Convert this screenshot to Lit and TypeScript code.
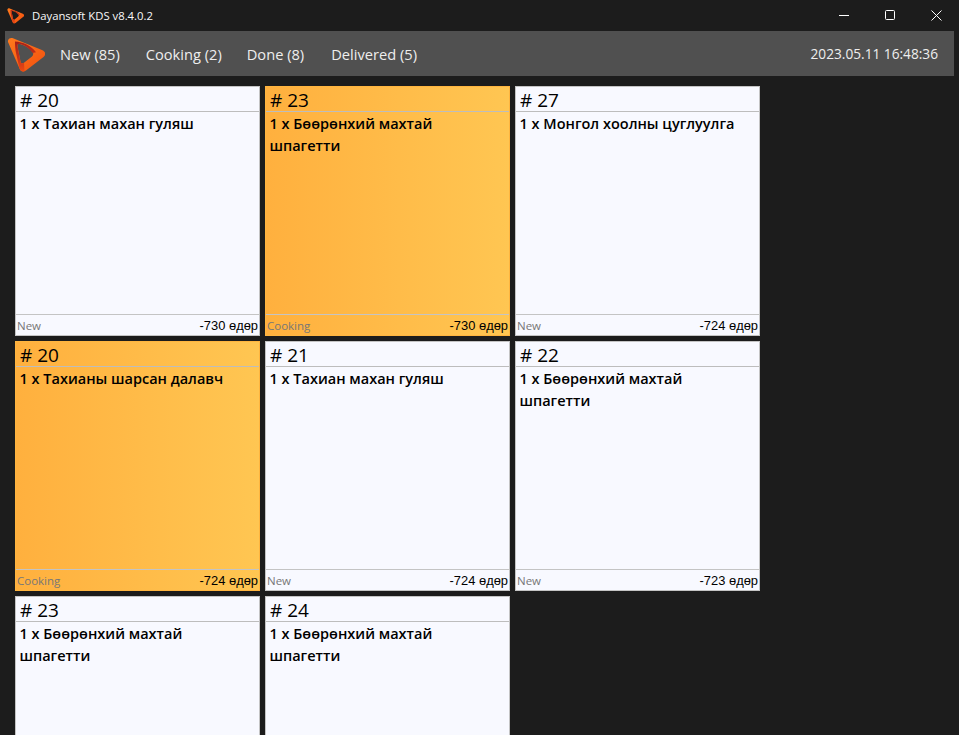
import { LitElement, html, css, svg } from "lit";
import { customElement } from "lit/decorators.js";

interface Order { no: number; item: string; status: string; days?: number; }

const orders: Order[] = [
  { no: 20, item: "1 x Тахиан махан гуляш", status: "New", days: -730 },
  { no: 23, item: "1 x Бөөрөнхий махтай шпагетти", status: "Cooking", days: -730 },
  { no: 27, item: "1 x Монгол хоолны цуглуулга", status: "New", days: -724 },
  { no: 20, item: "1 x Тахианы шарсан далавч", status: "Cooking", days: -724 },
  { no: 21, item: "1 x Тахиан махан гуляш", status: "New", days: -724 },
  { no: 22, item: "1 x Бөөрөнхий махтай шпагетти", status: "New", days: -723 },
  { no: 23, item: "1 x Бөөрөнхий махтай шпагетти", status: "New" },
  { no: 24, item: "1 x Бөөрөнхий махтай шпагетти", status: "New" },
];

const logo = (size: number) => html`<svg width=${size} height=${size} viewBox="0 0 38 38" aria-hidden="true">
  <defs>
    ${svg`<linearGradient id="lg${size}" x1="0" y1="0" x2="1" y2="1">
      <stop offset="0" stop-color="#ff7a1c"></stop>
      <stop offset="1" stop-color="#f2500f"></stop>
    </linearGradient>
    <linearGradient id="dk${size}" x1="0" y1="0" x2="0" y2="1">
      <stop offset="0" stop-color="#a82018"></stop>
      <stop offset=".6" stop-color="#c8341a"></stop>
      <stop offset="1" stop-color="#ee4a10"></stop>
    </linearGradient>`}
  </defs>
  ${svg`<path fill-rule="evenodd" fill="url(#lg${size})" d="M1 7C0.6 4 3 2.6 6 3.2L35.5 15.2C38.8 16.8 39 20 36.5 22L19 35.5C16 37.5 13.5 36.5 12.5 33.5ZM13 9C11.2 8.5 10.2 9.5 10.5 11.5L13.5 26.5C14 28.5 15.5 28.8 17 27.7L25 21.5C26.6 20 26.6 18 25.4 16.5C22 12.8 18 10.3 13 9Z"></path>
  <path fill="url(#dk${size})" d="M8 6.6C16 7 24 10.5 29 17.2L25.6 18C22 12.8 18 10.3 13 9C11.2 8.5 10.2 9.5 10.5 11.5L13.5 26.5C14 28.5 15.5 28.8 17 27.7L17.5 36.2C15.5 36.8 13.5 36 12.5 33.5L9 18C8.2 14 8 10 8 6.6Z"></path>`}
</svg>`;

@customElement("app-root")
export class AppRoot extends LitElement {
  static styles = css`
    :host {
      display: block;
      height: 735px;
      overflow: hidden;
      background: #1c1c1c;
      font-family: "Open Sans", "Noto Sans", sans-serif;
    }
    .titlebar {
      height: 31px;
      display: flex;
      align-items: center;
      color: #f8f8f8;
      font-size: 11.3px;
    }
    .app-icon {
      display: flex;
      margin-left: 7px;
      margin-right: 8px;
    }
    .title { flex: 1; padding-bottom: 1px; }
    .win-btn {
      width: 46px;
      height: 31px;
      display: flex;
      align-items: center;
      justify-content: center;
      padding-bottom: 1px;
      box-sizing: border-box;
    }
    .win-btns { display: flex; }
    .nav {
      margin: 0 5px;
      height: 45px;
      background: #505050;
      display: flex;
      align-items: center;
      color: #eee;
      font-size: 14.65px;
    }
    .nav-logo { display: flex; margin-left: 2px; margin-right: 15px; }
    .tabs { display: flex; flex: 1; gap: 26px; }
    .tabs span:nth-child(2) { margin-right: -1px; }
    .tabs span:nth-child(3) { margin-right: 1px; }
    .clock { margin-right: 16px; font-size: 13.7px; }
    .grid {
      display: grid;
      grid-template-columns: repeat(3, 245px);
      grid-auto-rows: 250px;
      gap: 5px;
      padding: 10px 0 0 15px;
    }
    .card {
      box-sizing: border-box;
      border: 1px solid #c4c4c4;
      background: #f8f9ff;
      color: #000;
      display: flex;
      flex-direction: column;
    }
    .card.cooking {
      border-color: #ffb53f;
      background: linear-gradient(90deg, #ffb03e, #ffc652);
    }
    .head {
      height: 24px;
      border-bottom: 1px solid #bdbdbd;
      font-size: 19px;
      line-height: 26px;
      padding-left: 4px;
      overflow: hidden;
      box-sizing: content-box;
    }
    .item {
      flex: 1;
      font-size: 14.5px;
      font-weight: 600;
      line-height: 22px;
      padding: 1px 15px 0 3.5px;
    }
    .foot {
      height: 21px;
      box-sizing: border-box;
      border-top: 1px solid #c4c4c4;
      display: flex;
      justify-content: space-between;
      align-items: center;
      padding: 1px 1px 0;
      font-family: "Liberation Sans", sans-serif;
      font-size: 12.9px;
    }
    .status { color: #777; font-family: "Open Sans", sans-serif; font-size: 11.5px; margin-top: -1px; }
  `;

  render() {
    return html`
      <div class="titlebar">
        <span class="app-icon">${logo(17)}</span>
        <span class="title">Dayansoft KDS v8.4.0.2</span>
        <div class="win-btns">
          <span class="win-btn"><svg width="10" height="10" viewBox="0 0 10 10"><path d="M0 5.5H10" stroke="#fff" fill="none"></path></svg></span>
          <span class="win-btn"><svg width="10" height="10" viewBox="0 0 10 10"><rect x=".5" y=".5" width="9" height="9" rx="1" stroke="#fff" fill="none"></rect></svg></span>
          <span class="win-btn"><svg width="11" height="11" viewBox="0 0 11 11"><path d="M.5 .5L10.5 10.5M10.5 .5L.5 10.5" stroke="#fff" fill="none"></path></svg></span>
        </div>
      </div>
      <nav class="nav">
        <span class="nav-logo">${logo(38)}</span>
        <div class="tabs">
          <span>New (85)</span><span>Cooking (2)</span><span>Done (8)</span><span>Delivered (5)</span>
        </div>
        <span class="clock">2023.05.11 16:48:36</span>
      </nav>
      <div class="grid">
        ${orders.map(
          (o) => html`<div class="card ${o.status === "Cooking" ? "cooking" : ""}">
            <div class="head"># ${o.no}</div>
            <div class="item">${o.item}</div>
            ${o.days === undefined
              ? ""
              : html`<div class="foot"><span class="status">${o.status}</span><span>${o.days} өдөр</span></div>`}
          </div>`
        )}
      </div>
    `;
  }
}
